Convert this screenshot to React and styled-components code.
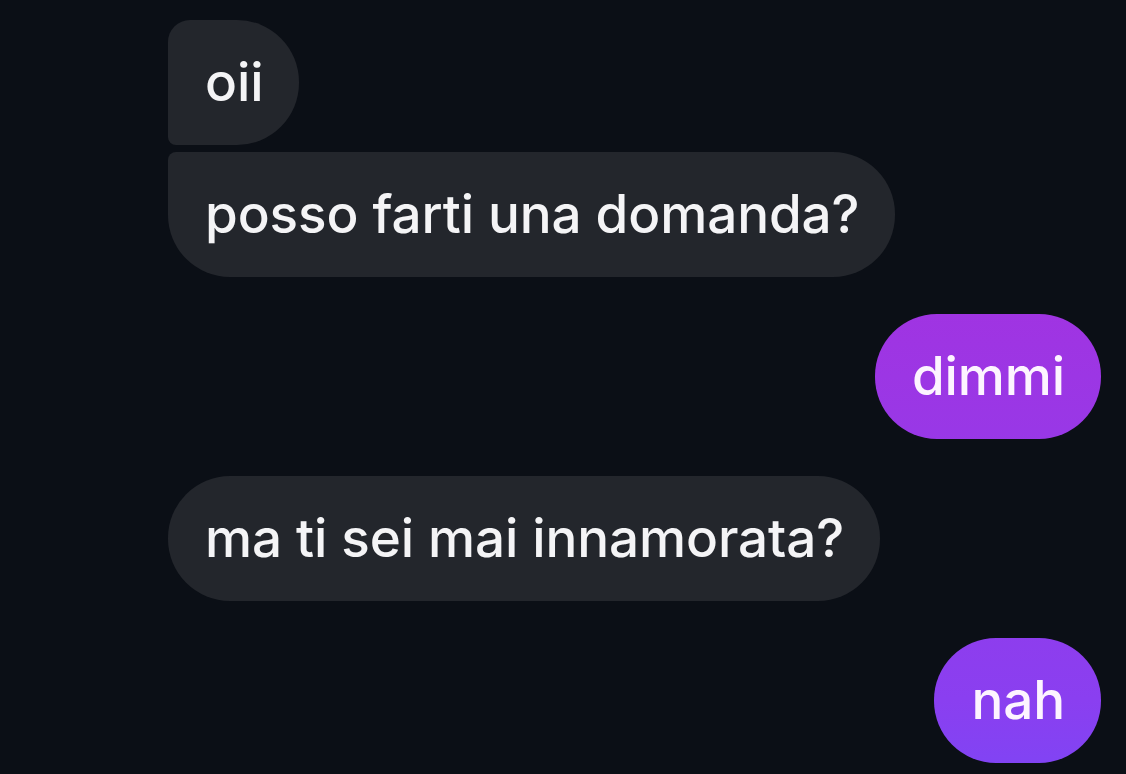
import React from 'react';
import styled, { createGlobalStyle, css } from 'styled-components';

const GlobalStyle = createGlobalStyle`
  html, body {
    margin: 0;
    padding: 0;
    background: #0b0f16;
  }
  body {
    font-family: Inter, "Noto Sans", sans-serif;
  }
`;

const messages = [
  { id: 1, from: 'them', text: 'oii', pos: 'first' },
  { id: 2, from: 'them', text: 'posso farti una domanda?', pos: 'last' },
  { id: 3, from: 'me', text: 'dimmi', pos: 'single' },
  { id: 4, from: 'them', text: 'ma ti sei mai innamorata?', pos: 'single' },
  { id: 5, from: 'me', text: 'nah', pos: 'single' },
];

const App = () => {
  return (
    <>
      <GlobalStyle />
      <Thread>
        {messages.map((m, i) => {
          const prev = messages[i - 1];
          const grouped = prev && prev.from === m.from;
          return (
            <Row key={m.id} $mine={m.from === 'me'} $grouped={grouped}>
              <Bubble $mine={m.from === 'me'} $pos={m.pos}>
                {m.text}
              </Bubble>
            </Row>
          );
        })}
      </Thread>
    </>
  );
};

const Thread = styled.div`
  width: 1126px;
  height: 774px;
  box-sizing: border-box;
  padding: 20px 25px 0 168px;
  display: flex;
  flex-direction: column;
  overflow: hidden;
`;

const Row = styled.div`
  display: flex;
  justify-content: ${(p) => (p.$mine ? 'flex-end' : 'flex-start')};
  margin-top: ${(p) => (p.$grouped ? '7px' : '37px')};

  &:first-child {
    margin-top: 0;
  }
`;

const radii = {
  first: css`border-radius: 22px 62px 62px 8px;`,
  last: css`border-radius: 8px 62px 62px 62px;`,
  single: css`border-radius: 62px;`,
};

const Bubble = styled.div`
  height: 125px;
  box-sizing: border-box;
  padding: 0 36px 2px 37px;
  display: flex;
  align-items: center;
  font-size: 53px;
  font-weight: 500;
  letter-spacing: -0.1px;
  color: #f4f4f6;
  background: #23262c;
  ${(p) => radii[p.$pos]}

  ${(p) =>
    p.$mine &&
    css`
      color: #fdf4ff;
      background: linear-gradient(180deg, #b22ad8 0px, #9c36e4 376px, #8a3ff0 700px, #8044f4 774px);
      background-attachment: fixed;
    `}
`;

export default App;
